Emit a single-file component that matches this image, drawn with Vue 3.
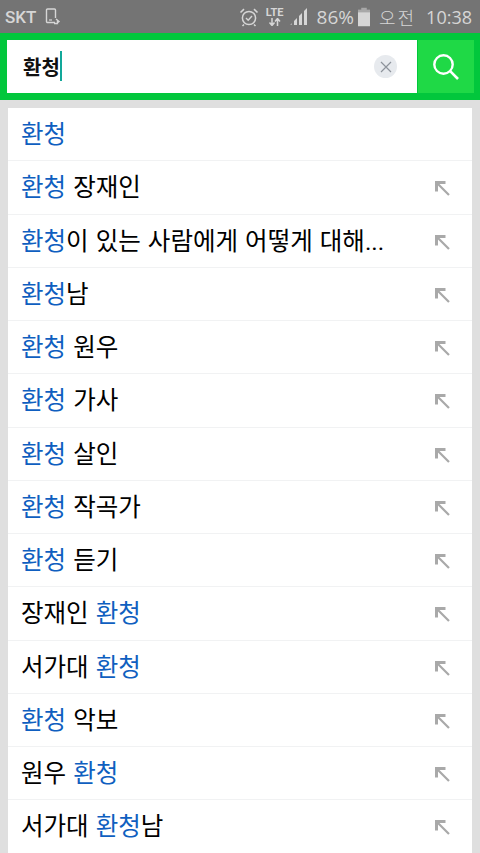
<template>
  <div class="screen">
    <!-- status bar -->
    <div class="status">
      <div class="status-left">
        <span class="carrier">SKT</span>
        <svg class="ic-device" width="16" height="18" viewBox="0 0 16 18" fill="none">
          <path d="M10 14.5H2.5a1 1 0 0 1-1-1V2a1 1 0 0 1 1-1h7a1 1 0 0 1 1 1v8" stroke="#d6d6d6" stroke-width="1.4" />
          <path d="M4 12h3" stroke="#d6d6d6" stroke-width="1.2" />
          <path d="M9 15.5h3.5V12.5M11 11l3 2.5-3 2.5" stroke="#d6d6d6" stroke-width="1.4" />
        </svg>
      </div>
      <div class="status-right">
        <svg width="20" height="20" viewBox="0 0 20 20" fill="none" class="ic-alarm">
          <circle cx="10" cy="11" r="6.6" stroke="#d6d6d6" stroke-width="1.5" />
          <path d="M7 11l2.2 2.2L13 9" stroke="#d6d6d6" stroke-width="1.4" />
          <path d="M1.5 5.5L5 2.2M18.5 5.5L15 2.2M5 17.5l-1.5 1.5M15 17.5l1.5 1.5" stroke="#d6d6d6" stroke-width="1.6" />
        </svg>
        <div class="lte">
          <span>LTE</span>
          <svg width="13" height="8" viewBox="0 0 13 8" fill="none">
            <path d="M4 0v7M1.5 4.5L4 7.5l2.5-3M9.5 8V1M7 3.5L9.5.5 12 3.5" stroke="#d6d6d6" stroke-width="1.5" />
          </svg>
        </div>
        <svg class="ic-signal" width="18" height="18" viewBox="0 0 18 18">
          <polygon points="0,17 2,15 2,17" fill="#a8a8a8" />
          <polygon points="4,17 4,13 7,10 7,17" fill="#d6d6d6" />
          <polygon points="9,17 9,8 12,5 12,17" fill="#d6d6d6" />
          <polygon points="14,17 14,3 17,0 17,17" fill="#d6d6d6" />
        </svg>
        <span class="batt-text">86%</span>
        <svg class="ic-batt" width="12" height="20" viewBox="0 0 13 20">
          <rect x="3.5" y="0" width="6" height="3" fill="#a8a8a8" />
          <rect x="0" y="2" width="13" height="4" fill="#a8a8a8" />
          <rect x="0" y="5" width="13" height="15" fill="#d6d6d6" />
        </svg>
        <span class="time"><span class="ampm">오전</span>10:38</span>
      </div>
    </div>

    <!-- search box -->
    <div class="search">
      <div class="field">
        <div class="query"><span>환청</span><i class="caret"></i></div>
        <div class="clear">
          <svg width="12" height="12" viewBox="0 0 12 12" fill="none">
            <path d="M1 1l10 10M11 1L1 11" stroke="#8d939b" stroke-width="1.2" />
          </svg>
        </div>
      </div>
      <div class="search-btn">
        <svg width="28" height="28" viewBox="0 0 28 28" fill="none">
          <circle cx="11.5" cy="11.5" r="9.2" stroke="#fff" stroke-width="2.4" />
          <path d="M18.2 18.2L26 26" stroke="#fff" stroke-width="2.6" />
        </svg>
      </div>
    </div>

    <!-- suggestions -->
    <ul class="list">
      <li v-for="(row, i) in rows" :key="i" class="row">
        <div class="label">
          <span v-for="(part, j) in row" :key="j" :class="{ hit: part === '환청' }">{{ part }}</span>
        </div>
        <svg v-if="i > 0" class="arrow" width="15" height="15" viewBox="0 0 15 15" fill="none">
          <path d="M1.5 10.5V1.5H10.5" stroke="#a9a9a9" stroke-width="3" />
          <path d="M2.5 2.5L14 14" stroke="#a9a9a9" stroke-width="2.2" />
        </svg>
      </li>
    </ul>
  </div>
</template>

<script setup>
const rows = [
  ['환청'],
  ['환청', ' 장재인'],
  ['환청', '이 있는 사람에게 어떻게 대해...'],
  ['환청', '남'],
  ['환청', ' 원우'],
  ['환청', ' 가사'],
  ['환청', ' 살인'],
  ['환청', ' 작곡가'],
  ['환청', ' 듣기'],
  ['장재인 ', '환청'],
  ['서가대 ', '환청'],
  ['환청', ' 악보'],
  ['원우 ', '환청'],
  ['서가대 ', '환청', '남']
]
</script>

<style>
html, body {
  margin: 0;
  overflow: hidden;
}
</style>

<style scoped>
.screen {
  width: 480px;
  height: 853px;
  overflow: hidden;
  background: #dfdfdf;
  font-family: "Roboto", "Noto Sans CJK KR", sans-serif;
}

.status {
  height: 33px;
  background: #747474;
  color: #d6d6d6;
  display: flex;
  justify-content: space-between;
  align-items: center;
  padding: 0 8px 0 5px;
}

.status-left, .status-right {
  display: flex;
  align-items: center;
}

.carrier {
  font-size: 17px;
  font-weight: 500;
}

.ic-device {
  margin-left: 9px;
}

.ic-alarm {
  margin-right: 6px;
}

.lte {
  display: flex;
  flex-direction: column;
  align-items: center;
  width: 20px;
  font-size: 11px;
  font-weight: 700;
  line-height: 10px;
  margin-right: 2px;
}

.ic-signal {
  margin-left: 3px;
}

.batt-text {
  font-size: 19px;
  margin-left: 9px;
  font-family: "Open Sans", sans-serif;
}

.ic-batt {
  margin-left: 4px;
}

.time {
  display: flex;
  align-items: center;
  font-size: 18px;
  margin-left: 9px;
  font-family: "Open Sans", "Noto Sans CJK KR", sans-serif;
  white-space: nowrap;
}

.ampm {
  font-size: 18px;
  font-weight: 300;
  letter-spacing: 2px;
  margin-right: 10px;
}

.search {
  height: 67px;
  box-sizing: border-box;
  background: #02c73c;
  padding: 7px 6px 7px 7px;
  display: flex;
}

.field {
  flex: 1;
  background: #fff;
  display: flex;
  align-items: center;
  justify-content: space-between;
  padding: 0 20px 0 16px;
}

.query {
  display: flex;
  align-items: center;
  font-size: 20px;
  font-weight: 700;
  color: #111;
  margin-top: -1px;
}

.caret {
  width: 2px;
  height: 30px;
  background: #12a89a;
}

.clear {
  width: 23px;
  height: 23px;
  border-radius: 50%;
  background: #e7eaee;
  display: flex;
  align-items: center;
  justify-content: center;
}

.search-btn {
  width: 56px;
  margin-left: 1px;
  background: #1fd946;
  display: flex;
  align-items: center;
  justify-content: center;
}

.list {
  list-style: none;
  margin: 8px 8px 0 8px;
  padding: 0;
  background: #fff;
}

.row {
  height: 53.25px;
  box-sizing: border-box;
  border-bottom: 1px solid #f1f2f3;
  display: flex;
  align-items: center;
  justify-content: space-between;
  padding: 0 22px 0 13px;
}

.label {
  font-size: 24.5px;
  color: #000;
  white-space: pre;
  word-spacing: 1px;
  margin-top: -3px;
}

.hit {
  color: #0f5fc0;
}

.arrow {
  flex-shrink: 0;
  margin-top: 3px;
}
</style>
